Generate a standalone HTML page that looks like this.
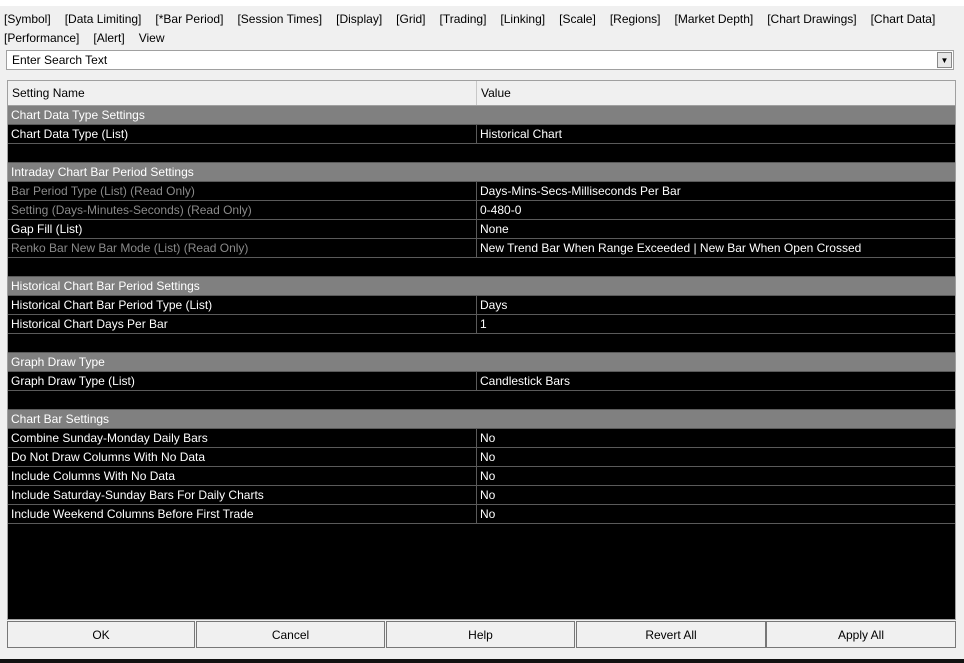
<!DOCTYPE html><html><head><style>
body{margin:0;width:964px;height:663px;background:#f0f0f0;font-family:"Liberation Sans",sans-serif;font-size:12px;position:relative;overflow:hidden}
.a{position:absolute;white-space:nowrap}
.menu span{margin-right:14px}
#tbl{position:absolute;left:7px;top:80px;width:949px;height:540px;background:#000;border:1px solid #a0a0a0;box-sizing:border-box}
.hd{position:absolute;left:0;top:0;width:100%;height:25px;background:#f0f0f0;border-bottom:1px solid #a0a0a0;box-sizing:border-box}
.r{position:absolute;left:0;width:100%;height:19px;border-bottom:1px solid #5a5a5a;box-sizing:border-box;color:#fff;line-height:18px}
.g{background:#808080;color:#fff}
.r .n{position:absolute;left:3px}
.r .v{position:absolute;left:468px;border-left:1px solid #5a5a5a;padding-left:3px;height:18px}
.ro .n{color:#8a8a8a}
.btn{position:absolute;top:621px;height:27px;background:#f0f0f0;border:1px solid #777;box-sizing:border-box;text-align:center;line-height:26px}
</style></head><body>
<div class="a" style="left:0;top:0;width:964px;height:6px;background:#fff"></div>
<div class="a menu" style="left:4px;top:12px"><span>[Symbol]</span><span>[Data Limiting]</span><span>[*Bar Period]</span><span>[Session Times]</span><span>[Display]</span><span>[Grid]</span><span>[Trading]</span><span>[Linking]</span><span>[Scale]</span><span>[Regions]</span><span>[Market Depth]</span><span>[Chart Drawings]</span><span>[Chart Data]</span></div>
<div class="a menu" style="left:4px;top:31px"><span>[Performance]</span><span>[Alert]</span><span>View</span></div>
<div class="a" style="left:6px;top:50px;width:948px;height:20px;background:#fff;border:1px solid #a0a0a0;box-sizing:border-box"><span style="position:absolute;left:5px;top:2px">Enter Search Text</span><div style="position:absolute;right:1px;top:1px;width:15px;height:16px;background:#e8e8e8;border:1px solid #888;box-sizing:border-box;font-size:8px;text-align:center;line-height:15px">▼</div></div>
<div id="tbl">
<div class="hd"><span class="a" style="left:4px;top:5px">Setting Name</span><span class="a" style="left:468px;top:0;height:24px;border-left:1px solid #c8c8c8"></span><span class="a" style="left:473px;top:5px">Value</span></div>
<div class="r g" style="top:25px"><span class="n">Chart Data Type Settings</span></div>
<div class="r" style="top:44px"><span class="n">Chart Data Type (List)</span><span class="v">Historical Chart</span></div>
<div class="r" style="top:63px"></div>
<div class="r g" style="top:82px"><span class="n">Intraday Chart Bar Period Settings</span></div>
<div class="r ro" style="top:101px"><span class="n">Bar Period Type (List) (Read Only)</span><span class="v">Days-Mins-Secs-Milliseconds Per Bar</span></div>
<div class="r ro" style="top:120px"><span class="n">Setting (Days-Minutes-Seconds) (Read Only)</span><span class="v">0-480-0</span></div>
<div class="r" style="top:139px"><span class="n">Gap Fill (List)</span><span class="v">None</span></div>
<div class="r ro" style="top:158px"><span class="n">Renko Bar New Bar Mode (List) (Read Only)</span><span class="v">New Trend Bar When Range Exceeded | New Bar When Open Crossed</span></div>
<div class="r" style="top:177px"></div>
<div class="r g" style="top:196px"><span class="n">Historical Chart Bar Period Settings</span></div>
<div class="r" style="top:215px"><span class="n">Historical Chart Bar Period Type (List)</span><span class="v">Days</span></div>
<div class="r" style="top:234px"><span class="n">Historical Chart Days Per Bar</span><span class="v">1</span></div>
<div class="r" style="top:253px"></div>
<div class="r g" style="top:272px"><span class="n">Graph Draw Type</span></div>
<div class="r" style="top:291px"><span class="n">Graph Draw Type (List)</span><span class="v">Candlestick Bars</span></div>
<div class="r" style="top:310px"></div>
<div class="r g" style="top:329px"><span class="n">Chart Bar Settings</span></div>
<div class="r" style="top:348px"><span class="n">Combine Sunday-Monday Daily Bars</span><span class="v">No</span></div>
<div class="r" style="top:367px"><span class="n">Do Not Draw Columns With No Data</span><span class="v">No</span></div>
<div class="r" style="top:386px"><span class="n">Include Columns With No Data</span><span class="v">No</span></div>
<div class="r" style="top:405px"><span class="n">Include Saturday-Sunday Bars For Daily Charts</span><span class="v">No</span></div>
<div class="r" style="top:424px"><span class="n">Include Weekend Columns Before First Trade</span><span class="v">No</span></div>
</div>
<div class="btn" style="left:7px;width:188px">OK</div>
<div class="btn" style="left:196px;width:189px">Cancel</div>
<div class="btn" style="left:386px;width:189px">Help</div>
<div class="btn" style="left:576px;width:190px">Revert All</div>
<div class="btn" style="left:766px;width:190px">Apply All</div>
<div class="a" style="left:0;top:659px;width:964px;height:4px;background:#111"></div>
</body></html>
